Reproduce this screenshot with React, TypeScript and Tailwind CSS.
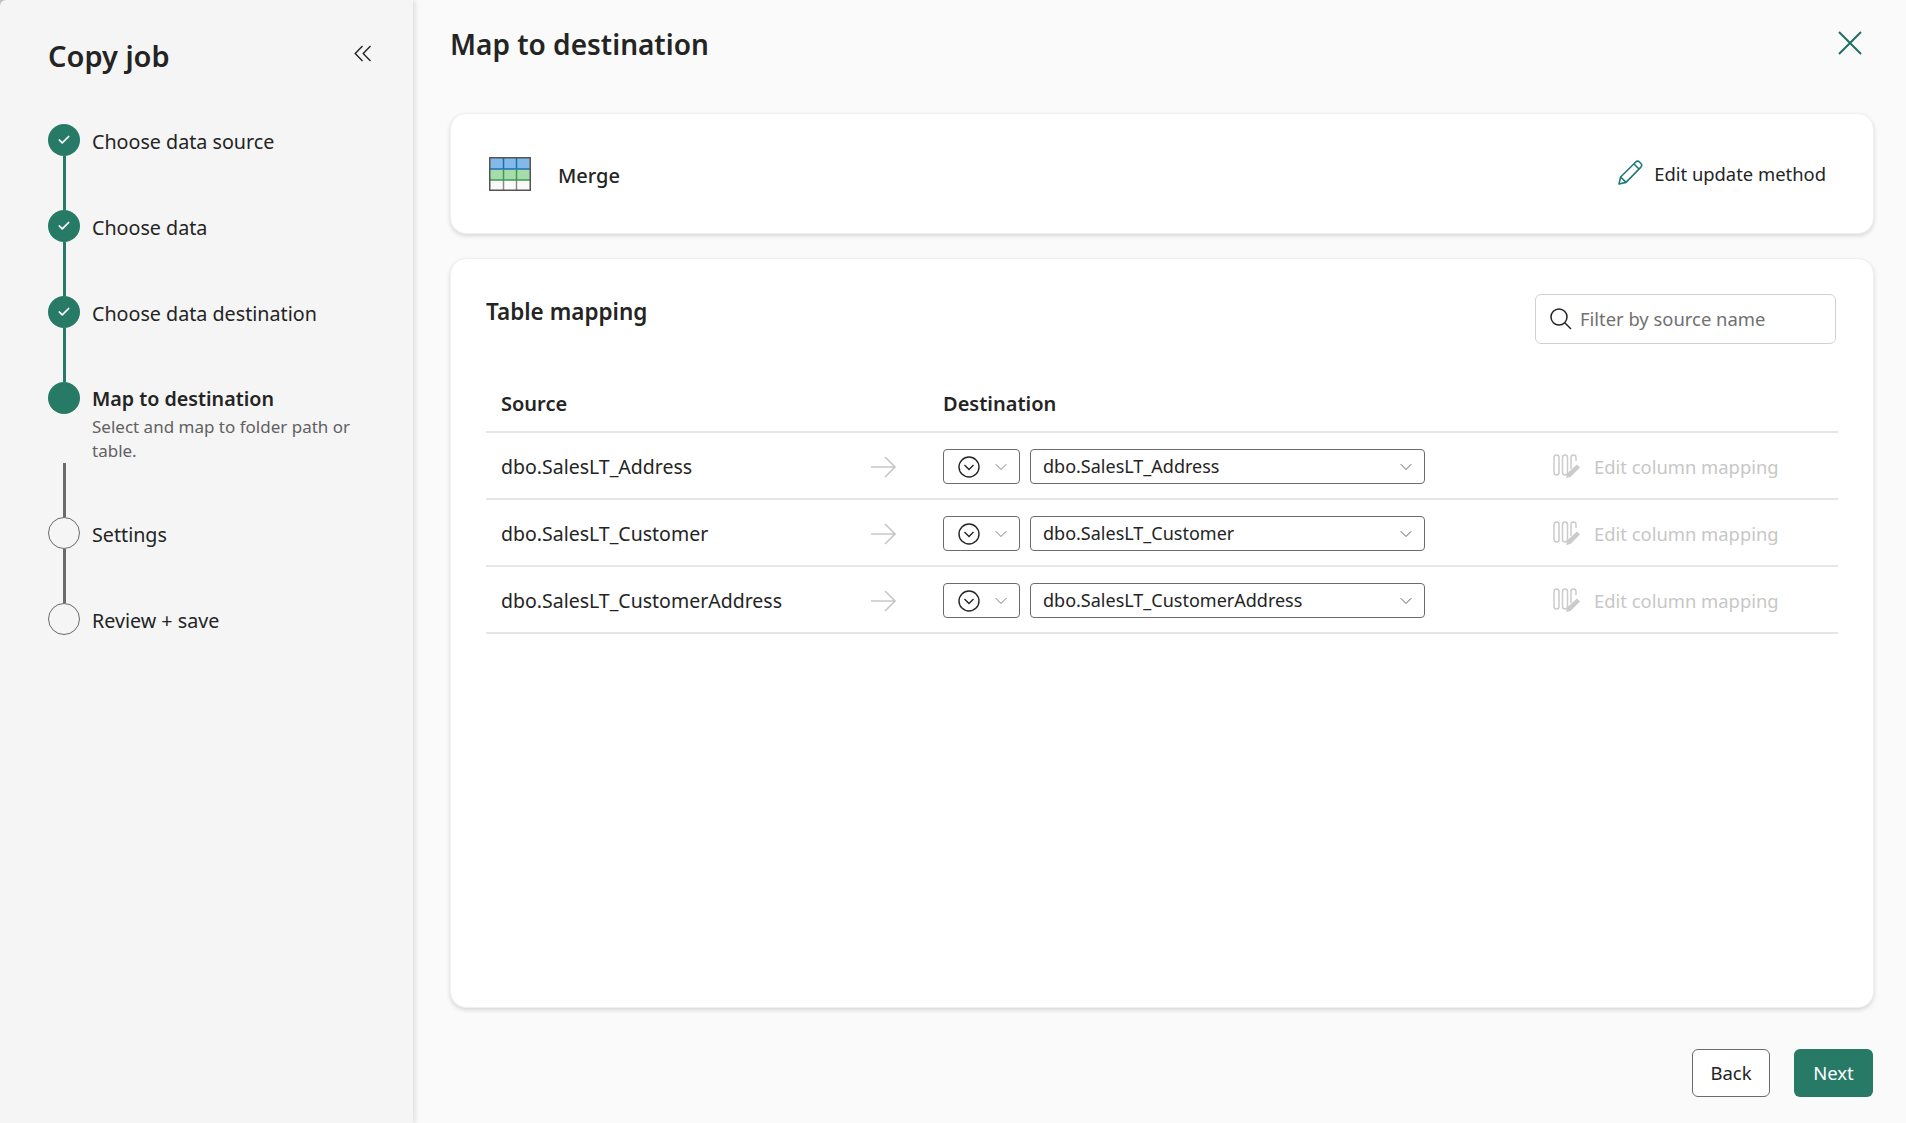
import React from "react";
import { Check, ChevronDown } from "lucide-react";

const font = { fontFamily: '"Noto Sans", "Open Sans", sans-serif' };

interface StepProps {
  label: string;
  state: "done" | "active" | "todo";
  description?: string;
  line?: "green" | "gray" | "none";
}

const steps: StepProps[] = [
  { label: "Choose data source", state: "done", line: "green" },
  { label: "Choose data", state: "done", line: "green" },
  { label: "Choose data destination", state: "done", line: "green" },
  {
    label: "Map to destination",
    state: "active",
    description: "Select and map to folder path or table.",
    line: "gray",
  },
  { label: "Settings", state: "todo", line: "gray" },
  { label: "Review + save", state: "todo", line: "none" },
];

const rows = [
  "dbo.SalesLT_Address",
  "dbo.SalesLT_Customer",
  "dbo.SalesLT_CustomerAddress",
];

const Step: React.FC<StepProps> = ({ label, state, description, line }) => {
  return (
    <div className="flex gap-3">
      <div className="flex w-8 flex-col items-center">
        {state === "todo" ? (
          <div className="h-8 w-8 shrink-0 rounded-full border border-[#6b6b6b]" />
        ) : (
          <div className="flex h-8 w-8 shrink-0 items-center justify-center rounded-full bg-[#277a66]">
            {state === "done" && (
              <Check className="h-[14px] w-[14px] text-white" strokeWidth={3} />
            )}
          </div>
        )}
        {state === "active" && <div className="h-[49px] shrink-0" />}
        {line === "green" && <div className="h-[54px] w-[3px] bg-[#277a66]" />}
        {line === "gray" && <div className="h-[54px] w-[3px] bg-[#6b6b6b]" />}
      </div>
      <div className={`w-[270px] ${state === "active" ? "pt-[2px]" : "pt-[3px]"}`}>
        <div
          className={`text-[19.7px] leading-[30px] text-[#242424] ${state === "active" ? "font-semibold" : ""}`}
        >
          {label}
        </div>
        {description && (
          <div className="mt-[1px] text-[17px] leading-[24px] text-[#616161]">
            {description}
          </div>
        )}
      </div>
    </div>
  );
};

const MergeIcon = () => (
  <svg width="42" height="34" viewBox="0 0 42 34">
    <rect x="1" y="1" width="40" height="11" fill="#83b9e8" />
    <rect x="1" y="12" width="40" height="11" fill="#a6dcab" />
    <rect x="1" y="23" width="40" height="10" fill="#fafafa" />
    <path d="M14.5 23V33M27.5 23V33" stroke="#8a8a8a" strokeWidth="1.5" />
    <path d="M14.5 1V12M27.5 1V12M1 12H41" stroke="#1c6fb5" strokeWidth="1.5" />
    <path d="M14.5 12V23M27.5 12V23M1 23H41" stroke="#3d9a4f" strokeWidth="1.5" />
    <rect x="0.75" y="0.75" width="40.5" height="32.5" fill="none" stroke="#555555" strokeWidth="1.5" />
  </svg>
);

const ColumnMapIcon = () => (
  <svg width="28" height="26" viewBox="0 0 28 26" fill="none" stroke="#cbcbcb" strokeWidth="1.5">
    <rect x="1" y="2" width="5" height="20" rx="2.5" />
    <rect x="9.5" y="2" width="5" height="20" rx="2.5" />
    <path d="M18 16V4.5a2.5 2.5 0 0 1 5 0V8" />
    <path d="M13 25l1.5-5L24 11.5l3 3L17.5 24z" fill="#cbcbcb" stroke="none" />
  </svg>
);

export default function App() {
  return (
    <div className="flex h-[1123px] w-full overflow-hidden bg-[#c4c4c4]" style={font}>
      <aside className="z-10 h-full w-[413px] shrink-0 rounded-tl-md bg-[#f5f5f5] pl-12 shadow-[2px_0_5px_rgba(0,0,0,0.12)]">
        <div className="flex h-[124px] items-start pr-[41px]">
          <h1 className="mt-[36px] flex-1 text-[29px] leading-[40px] font-semibold text-[#242424]">
            Copy job
          </h1>
          <svg className="mt-[45px]" width="18" height="18" viewBox="0 0 18 18" fill="none" stroke="#242424" strokeWidth="1.4">
            <path d="M8.5 1L1.2 8.5l7.3 7.5M16.5 1L9.2 8.5l7.3 7.5" />
          </svg>
        </div>
        {steps.map((s) => (
          <Step key={s.label} {...s} />
        ))}
      </aside>

      <main className="flex min-w-0 flex-1 flex-col bg-[#fafafa] pr-8 pl-[37px]">
        <div className="flex h-[113px] items-start justify-between">
          <h2 className="mt-[24px] text-[28px] leading-[40px] font-semibold text-[#242424]">
            Map to destination
          </h2>
          <svg className="mt-[31px] mr-[12px]" width="24" height="24" viewBox="0 0 24 24" fill="none" stroke="#1f6f66" strokeWidth="2">
            <path d="M1 1l22 22M23 1L1 23" />
          </svg>
        </div>

        <section className="flex h-[121px] items-center justify-between rounded-2xl border border-[#f0f0f0] bg-white pr-[47px] pl-[38px] shadow-[0_2px_4px_rgba(0,0,0,0.14)]">
          <div className="flex items-center gap-[27px]">
            <MergeIcon />
            <span className="mt-[5px] text-[20px] font-medium text-[#242424]">Merge</span>
          </div>
          <div className="flex items-center gap-[11px]">
            <svg width="26" height="26" viewBox="0 0 26 26" fill="none" stroke="#1f7a78" strokeWidth="1.6" strokeLinejoin="round">
              <path d="M2 24l1.6-7L18.5 2.2a3 3 0 0 1 4.2 0l1 1a3 3 0 0 1 0 4.2L9 22.4z" />
              <path d="M3.6 17L9 22.4M17 4l5 5" />
            </svg>
            <span className="text-[18.4px] text-[#242424]">Edit update method</span>
          </div>
        </section>

        <section className="mt-6 h-[750px] rounded-2xl border border-[#f0f0f0] bg-white pt-[35px] pr-[35px] pl-[35px] shadow-[0_2px_4px_rgba(0,0,0,0.14)]">
          <div className="flex items-start justify-between pr-[2px]">
            <h3 className="mt-[1px] text-[22.5px] leading-[34px] font-semibold text-[#242424]">Table mapping</h3>
            <div className="flex h-[50px] w-[301px] items-center gap-[8px] rounded-md border border-[#d1d1d1] bg-white pl-[14px]">
              <svg width="22" height="22" viewBox="0 0 22 22" fill="none" stroke="#242424" strokeWidth="1.5">
                <circle cx="9" cy="9" r="8" />
                <path d="M14.8 14.8L21 21" />
              </svg>
              <span className="text-[18.4px] text-[#707070]">Filter by source name</span>
            </div>
          </div>

          <div className="mt-[17px] flex h-[72px] items-center border-b-2 border-[#e6e6e6] pt-[15px] text-[20px] font-semibold text-[#242424]">
            <div className="w-[457px] pl-[15px]">Source</div>
            <div>Destination</div>
          </div>

          {rows.map((name) => (
            <div key={name} className="flex h-[67px] items-center border-b-2 border-[#e6e6e6] pt-[2px]">
              <div className="w-[385px] pl-[15px] text-[19.5px] text-[#242424]">{name}</div>
              <div className="w-[72px]">
                <svg width="26" height="22" viewBox="0 0 26 22" fill="none" stroke="#c7c7c7" strokeWidth="1.6" className="-ml-[1px]">
                  <path d="M1 11h24M15 1l10 10-10 10" />
                </svg>
              </div>
              <div className="flex h-[35px] w-[77px] items-center gap-[11px] rounded border border-[#6b6b6b] pl-[14px]">
                <svg width="22" height="22" viewBox="0 0 22 22" fill="none" stroke="#242424" strokeWidth="1.4">
                  <circle cx="11" cy="11" r="10" />
                  <path d="M6.5 9l4.5 4.5L15.5 9" />
                </svg>
                <ChevronDown className="h-5 w-5 text-[#707070]" strokeWidth={1.1} />
              </div>
              <div className="ml-[10px] flex h-[35px] w-[395px] items-center justify-between rounded border border-[#6b6b6b] pr-[8px] pl-[12px] text-[18px] text-[#242424]">
                <span>{name}</span>
                <ChevronDown className="h-5 w-5 text-[#616161]" strokeWidth={1.2} />
              </div>
              <div className="ml-[128px] flex items-center gap-[13px] text-[18.4px] text-[#c7c7c7]">
                <ColumnMapIcon />
                <span>Edit column mapping</span>
              </div>
            </div>
          ))}
        </section>

        <footer className="mt-[41px] flex justify-end gap-6 pr-[1px]">
          <button className="h-12 w-[78px] rounded-md border border-[#6b6b6b] bg-white text-[18.5px] text-[#242424]">
            Back
          </button>
          <button className="h-12 w-[79px] rounded-md bg-[#277a66] text-[18.5px] text-white">
            Next
          </button>
        </footer>
      </main>
    </div>
  );
}
